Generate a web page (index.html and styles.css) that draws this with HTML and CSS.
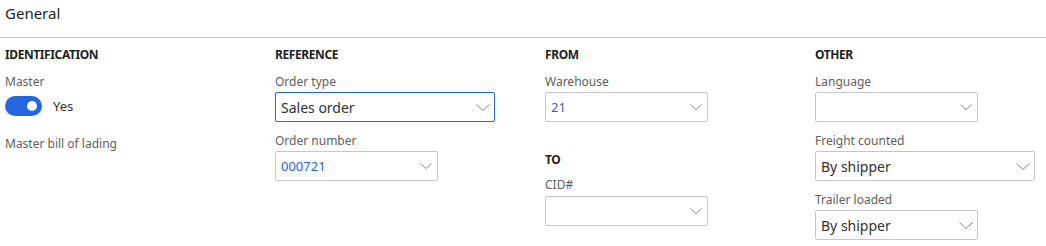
FILE: index.html
```html
<!DOCTYPE html>
<html>
<head>
<meta charset="utf-8">
<link rel="stylesheet" href="styles.css">
</head>
<body>
<div class="header"><h1 class="title">General</h1></div>
<div class="grid">
  <div class="col">
    <div class="group-title">IDENTIFICATION</div>
    <div class="label">Master</div>
    <div class="toggle-row">
      <span class="toggle"><span class="thumb"></span></span>
      <span class="toggle-text">Yes</span>
    </div>
    <div class="label label-gap">Master bill of lading</div>
  </div>
  <div class="col">
    <div class="group-title">REFERENCE</div>
    <div class="label">Order type</div>
    <div class="field combo wide focused"><span class="value">Sales order</span><svg class="chev" viewBox="0 0 14 7"><path d="M0.5 0.5 L7 6.5 L13.5 0.5" /></svg></div>
    <div class="label">Order number</div>
    <div class="field"><span class="value link">000721</span><svg class="chev" viewBox="0 0 12 6"><path d="M0.5 0.5 L6 5.5 L11.5 0.5" /></svg></div>
  </div>
  <div class="col">
    <div class="group-title">FROM</div>
    <div class="label">Warehouse</div>
    <div class="field"><span class="value link">21</span><svg class="chev" viewBox="0 0 12 6"><path d="M0.5 0.5 L6 5.5 L11.5 0.5" /></svg></div>
    <div class="group-title group-gap">TO</div>
    <div class="label label-tight">CID#</div>
    <div class="field"><span class="value"></span><svg class="chev" viewBox="0 0 12 6"><path d="M0.5 0.5 L6 5.5 L11.5 0.5" /></svg></div>
  </div>
  <div class="col">
    <div class="group-title">OTHER</div>
    <div class="label">Language</div>
    <div class="field"><span class="value"></span><svg class="chev" viewBox="0 0 12 6"><path d="M0.5 0.5 L6 5.5 L11.5 0.5" /></svg></div>
    <div class="label">Freight counted</div>
    <div class="field combo wide"><span class="value">By shipper</span><svg class="chev" viewBox="0 0 14 7"><path d="M0.5 0.5 L7 6.5 L13.5 0.5" /></svg></div>
    <div class="label">Trailer loaded</div>
    <div class="field combo"><span class="value">By shipper</span><svg class="chev" viewBox="0 0 14 7"><path d="M0.5 0.5 L7 6.5 L13.5 0.5" /></svg></div>
  </div>
</div>
</body>
</html>
```
FILE: styles.css
```css
html, body {
  margin: 0;
  padding: 0;
  background: #ffffff;
  font-family: "Noto Sans", "Open Sans", sans-serif;
  color: #323130;
  overflow: hidden;
}
.header {
  height: 38px;
  border-bottom: 1px solid #c8c6c4;
  box-sizing: border-box;
  padding: 3px 0 0 5px;
}
.title {
  margin: 0;
  font-size: 15px;
  font-weight: 400;
  line-height: 20px;
  color: #201f1e;
}
.grid {
  display: grid;
  grid-template-columns: 270px 270px 270px 270px;
  padding: 7px 0 0 5px;
}
.col {
  display: flex;
  flex-direction: column;
  align-items: flex-start;
}
.group-title {
  font-size: 12px;
  font-weight: 700;
  line-height: 20px;
  letter-spacing: -0.4px;
  color: #201f1e;
  margin-bottom: 9px;
}
.group-title.group-gap {
  margin-top: 17px;
  margin-bottom: 7px;
}
.label {
  font-size: 12px;
  line-height: 16px;
  color: #605e5c;
  margin-bottom: 2px;
}
.label.label-tight {
  margin-bottom: 3px;
}
.label.label-gap {
  margin-top: 20px;
}
.toggle-row {
  display: flex;
  align-items: center;
  height: 20px;
  margin-top: 4px;
}
.toggle {
  width: 37px;
  height: 20px;
  border-radius: 10px;
  background: #2266e3;
  position: relative;
}
.thumb {
  position: absolute;
  top: 5px;
  right: 5px;
  width: 10px;
  height: 10px;
  border-radius: 50%;
  background: #ffffff;
}
.toggle-text {
  margin-left: 11px;
  font-size: 13px;
  color: #323130;
}
.field {
  width: 163px;
  height: 30px;
  box-sizing: border-box;
  border: 1px solid #c8c6c4;
  border-radius: 2px;
  display: flex;
  align-items: center;
  justify-content: space-between;
  padding: 0 5px 0 5px;
  margin-bottom: 11px;
}
.field.wide {
  width: 220px;
}
.field.focused {
  border-color: #2266e3;
}
.value {
  font-size: 14px;
  color: #323130;
}
.value.link {
  font-size: 13px;
  color: #2266e3;
}
.chev {
  width: 12px;
  height: 6px;
  fill: none;
  stroke: #8a8886;
  stroke-width: 1;
}
.combo {
  padding-right: 4px;
}
.combo .chev {
  width: 14px;
  height: 7px;
}
```
